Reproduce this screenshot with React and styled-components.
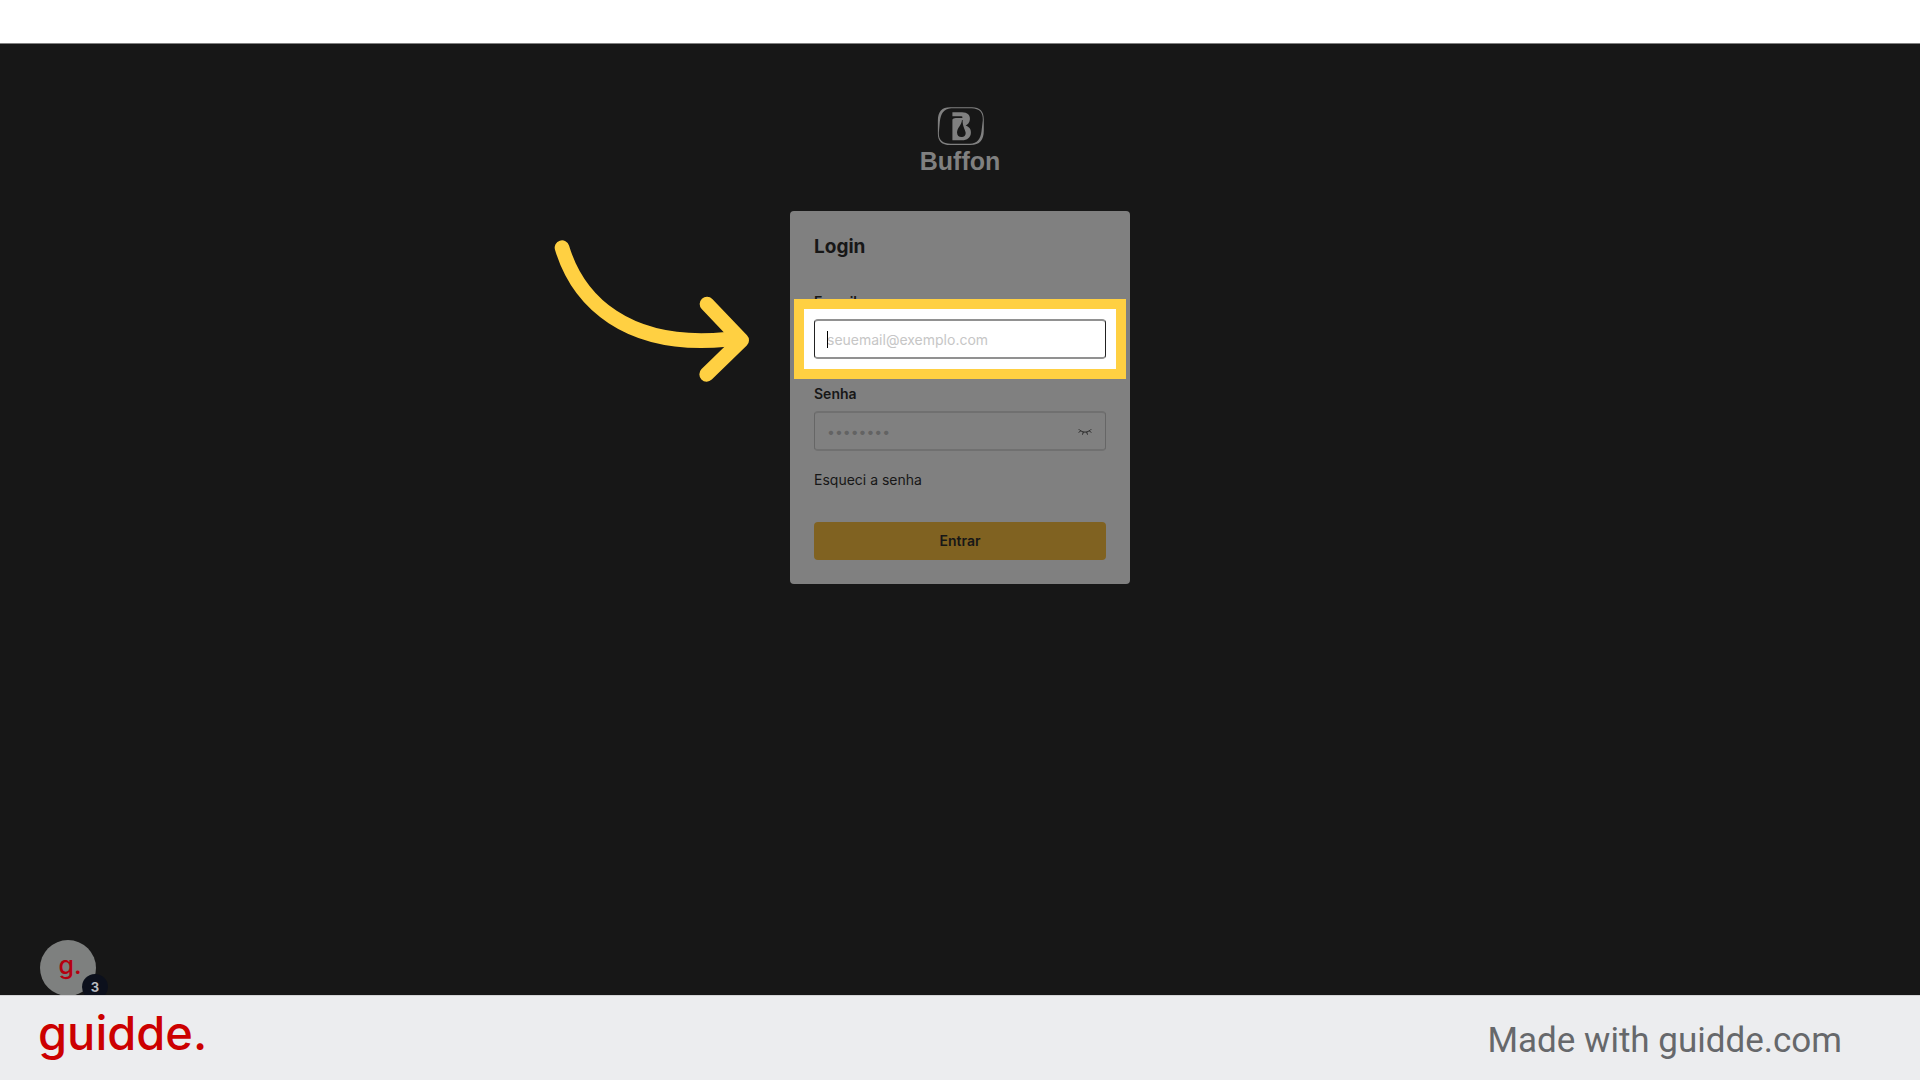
import React from "react";
import styled, { createGlobalStyle } from "styled-components";

const GlobalStyle = createGlobalStyle`
  * {
    box-sizing: border-box;
  }
  body {
    margin: 0;
    background: #171717;
    font-family: Inter, "Liberation Sans", sans-serif;
  }
`;

const BuffonEmblem = () => (
  <svg width="47" height="38" viewBox="107 50 141 115" aria-hidden="true">
    <path
      fill="#808080"
      fillRule="evenodd"
      d="M146 51H212C236 51 248 63 248 88V121C248 150 236 165 208 165H146C121 165 109 153 109 130V92C109 64 121 51 146 51ZM149 54C126 56 118 70 115 94L112 128C111 151 124 161 148 161H206C229 160 238 147 241 124L245 90C246 66 235 55 211 54Z"
    />
    <path
      fill="#808080"
      fillRule="evenodd"
      d="M153 66H182C199 66 207 75 206 87C205 97 200 103 193 106C204 110 210 117 209 129C208 143 198 151 182 151H153V88Q155 83 163 83H182C185 82 184 78 180 78H153ZM182 89C181 104 167 113 167 127C167 136 173 141 180 141C188 141 194 136 193 127C192 118 183 108 184 89Z"
    />
  </svg>
);

const ClosedEye = () => (
  <svg
    width="14"
    height="8"
    viewBox="0 0 14 8"
    fill="none"
    stroke="#292929"
    strokeLinecap="round"
    aria-hidden="true"
  >
    <path d="M1 2.5C3.8 6.1 10.2 6.1 13 2.5M2.6 3.8L1 5.4M5.3 5.2L4.6 7.3M8.7 5.2L9.4 7.3M11.4 3.8L13 5.4" />
  </svg>
);

const PointerArrow = () => (
  <Arrow viewBox="40 55 591 432" aria-hidden="true">
    <path d="M67 81C115 240 260 385 560 356" />
    <path d="M502 250L606 359L501 461" />
  </Arrow>
);

const App = () => {
  return (
    <Page>
      <GlobalStyle />
      <TopBar />
      <Stage>
        <Brand>
          <BuffonEmblem />
          <BrandName>Buffon</BrandName>
        </Brand>
        <Card onSubmit={(e) => e.preventDefault()}>
          <Title>Login</Title>
          <Label htmlFor="email">E-mail</Label>
          <Spotlight>
            <Input
              id="email"
              type="email"
              placeholder="seuemail@exemplo.com"
              $active
            />
            <Caret />
            <PointerArrow />
          </Spotlight>
          <Label htmlFor="password">Senha</Label>
          <Field>
            <Input id="password" type="password" placeholder="••••••••" />
            <EyeButton type="button" aria-label="Mostrar senha">
              <ClosedEye />
            </EyeButton>
          </Field>
          <ForgotLink href="#">Esqueci a senha</ForgotLink>
          <SubmitButton type="submit">Entrar</SubmitButton>
        </Card>
        <Widget type="button">
          g.
          <Badge>3</Badge>
        </Widget>
      </Stage>
      <Footer>
        <Wordmark>guidde.</Wordmark>
        <MadeWith>Made with guidde.com</MadeWith>
      </Footer>
    </Page>
  );
};

const Page = styled.div`
  display: flex;
  flex-direction: column;
  min-height: 100vh;
`;

const TopBar = styled.header`
  height: 44px;
  background: #fff;
  border-bottom: 1px solid #808080;
`;

const Stage = styled.main`
  position: relative;
  flex: 1;
  display: flex;
  flex-direction: column;
  align-items: center;
  padding: 63px 16px 64px;
  overflow: hidden;
  background: #171717;
`;

const Brand = styled.div`
  display: flex;
  flex-direction: column;
  align-items: center;
  margin-bottom: 34px;
`;

const BrandName = styled.span`
  color: #808080;
  font: bold 25px/32px "Liberation Sans", Arial, sans-serif;
`;

const Card = styled.form`
  display: flex;
  flex-direction: column;
  width: 100%;
  max-width: 340px;
  padding: 24px;
  border-radius: 4px;
  background: #808080;
  color: #171717;
`;

const Title = styled.h1`
  margin: 0 0 33px;
  font-size: 19px;
  font-weight: 700;
  line-height: 24px;
`;

const Label = styled.label`
  margin-bottom: 7px;
  font-size: 14px;
  font-weight: 600;
  line-height: 20px;
`;

const Field = styled.div`
  position: relative;
`;

const Spotlight = styled(Field)`
  margin-bottom: 25px;

  &::before {
    content: "";
    position: absolute;
    inset: -20px;
    border: 10px solid #ffd042;
    background: #fff;
  }
`;

const Input = styled.input`
  position: relative;
  display: block;
  width: 100%;
  height: 40px;
  padding: 0 12px;
  border: solid ${({ $active }) => ($active ? "#919191" : "#707070")};
  border-width: 2px 1px;
  border-left-color: ${({ $active }) => ($active ? "#222" : "#666")};
  border-right-color: ${({ $active }) => ($active ? "#222" : "#666")};
  border-radius: 4px;
  outline: none;
  background: ${({ $active }) => ($active ? "#fff" : "#808080")};
  color: #171717;
  font: 14px/20px Inter, sans-serif;

  &::placeholder {
    color: ${({ $active }) => ($active ? "#c6c6c6" : "#636363")};
    opacity: 1;
  }
`;

const Caret = styled.span`
  position: absolute;
  top: 12px;
  left: 13px;
  width: 1px;
  height: 17px;
  background: #000;
`;

const Arrow = styled.svg`
  position: absolute;
  top: -80px;
  right: calc(100% + 64px);
  width: 197px;
  height: 144px;
  fill: none;
  stroke: #ffd042;
  stroke-width: 44;
  stroke-linecap: round;
  stroke-linejoin: round;
`;

const EyeButton = styled.button`
  position: absolute;
  top: 0;
  right: 6px;
  display: grid;
  place-items: center;
  width: 30px;
  height: 40px;
  padding: 0;
  border: 0;
  background: none;
`;

const ForgotLink = styled.a`
  align-self: flex-start;
  margin: 19px 0 32px;
  color: #171717;
  font-size: 14px;
  line-height: 20px;
  text-decoration: none;
`;

const SubmitButton = styled.button`
  height: 38px;
  border: 0;
  border-radius: 4px;
  background: #806221;
  color: #171717;
  font: 600 14px/20px Inter, sans-serif;
`;

const Widget = styled.button`
  position: absolute;
  bottom: -1px;
  left: 40px;
  width: 56px;
  height: 56px;
  padding: 0 0 6px 4px;
  border: 0;
  border-radius: 50%;
  background: #7e807f;
  color: #b5000f;
  font: 500 25px/32px Inter, sans-serif;
`;

const Badge = styled.span`
  position: absolute;
  right: -12px;
  bottom: -4px;
  width: 26px;
  height: 26px;
  border-radius: 50%;
  background: #0c101c;
  color: #b9bbc0;
  font-size: 13px;
  font-weight: 700;
  line-height: 26px;
  text-align: center;
`;

const Footer = styled.footer`
  display: flex;
  align-items: center;
  justify-content: space-between;
  height: 85px;
  padding: 0 78px 0 38px;
  border-top: 1px solid #d4d4d6;
  background: #ecedef;
`;

const Wordmark = styled.span`
  padding-bottom: 10px;
  color: #c00;
  font-size: 47px;
  font-weight: 500;
  line-height: 56px;
`;

const MadeWith = styled.span`
  padding-top: 6px;
  color: #66686b;
  font: 35px/44px Roboto, sans-serif;
`;

export default App;
